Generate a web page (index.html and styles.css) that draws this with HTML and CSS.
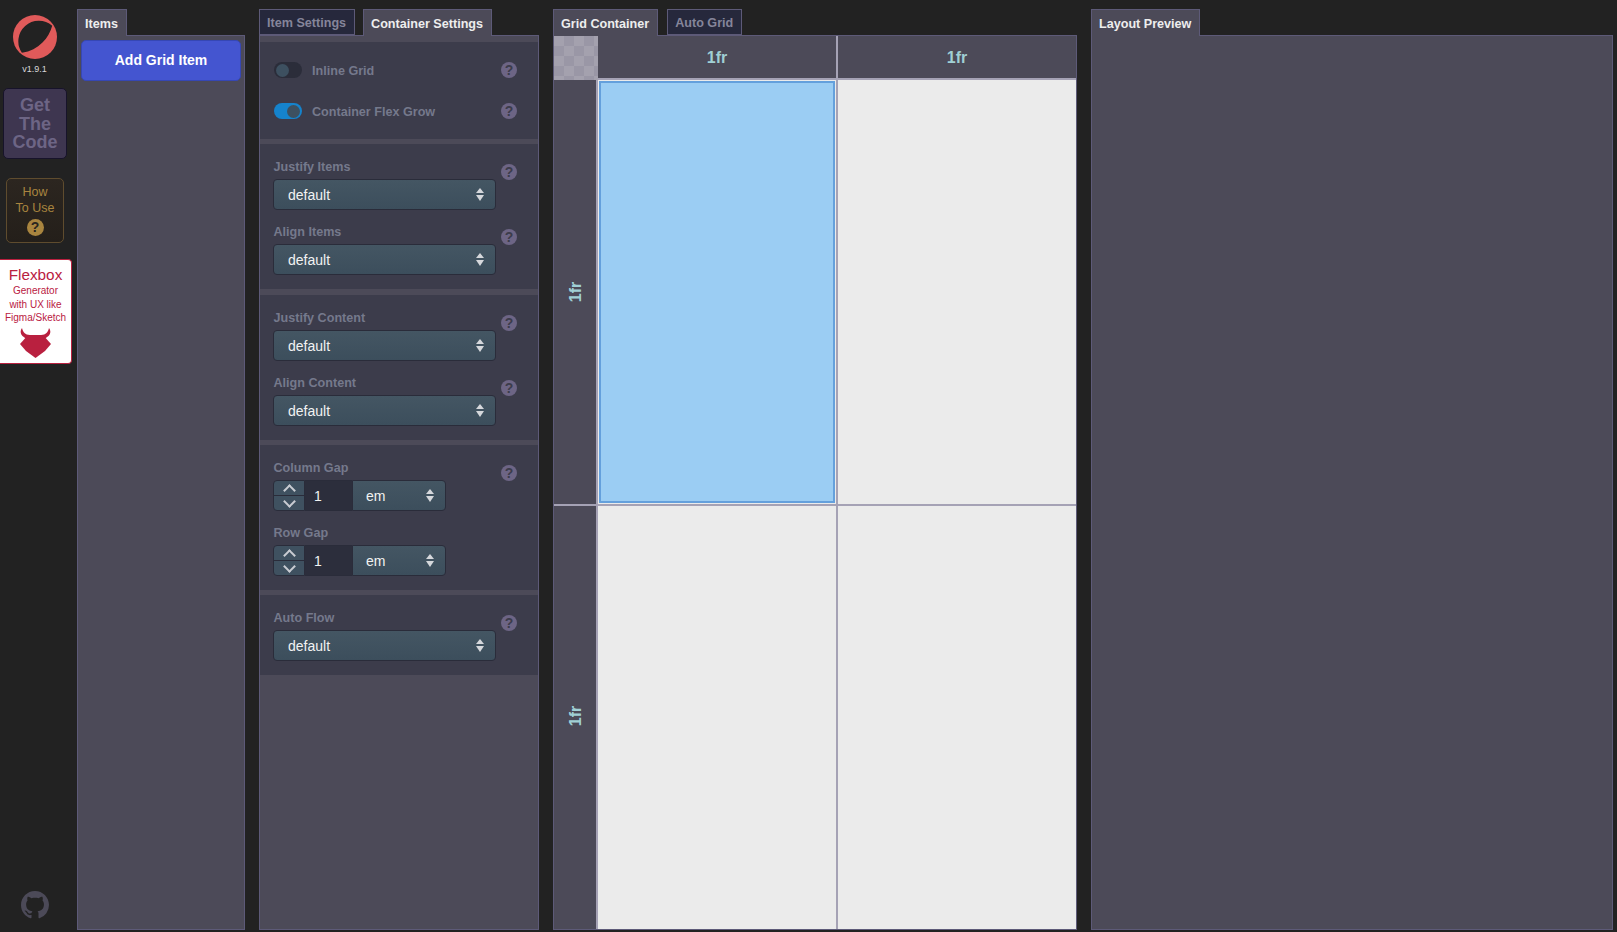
FILE: index.html
```html
<!DOCTYPE html>
<html lang="en">
  <head>
    <meta charset="UTF-8" />
    <title>Grid Generator</title>
    <link rel="stylesheet" href="styles.css">
  </head>
  <body>
    <div class="app">
      <div class="sidebar">
        <svg class="logo" viewBox="0 0 46 46">
          <circle cx="23" cy="23" r="22" fill="#e05a5a" />
          <path d="M9.9 38.8 A20.5 20.5 0 0 1 40.2 11.7 C37 24 27 36 9.9 38.8 Z" fill="#222222" />
        </svg>
        <div class="version">v1.9.1</div>
        <div class="getCode">Get The Code</div>
        <div class="howTo">
          <div>How<br />To Use</div>
          <div class="howToIcon">?</div>
        </div>
        <div class="flexbox">
          <div class="flexboxTitle">Flexbox</div>
          <div class="flexboxText">Generator<br />with UX like<br />Figma/Sketch</div>
          <svg class="bull" viewBox="0 0 31 31">
            <path d="M2 0 C-1 4 1 9 8 11 L10 7 C5 7 3 4 2 0 Z" fill="#b9203f" />
            <path d="M29 0 C32 4 30 9 23 11 L21 7 C26 7 28 4 29 0 Z" fill="#b9203f" />
            <path d="M8 7 L23 7 L31 16 L25 23 L15.5 30 L6 23 L0 16 Z" fill="#b9203f" />
          </svg>
        </div>
        <svg class="github" viewBox="0 0 16 16">
          <path d="M8 0C3.58 0 0 3.58 0 8c0 3.54 2.29 6.53 5.47 7.59.4.07.55-.17.55-.38 0-.19-.01-.82-.01-1.49-2.01.37-2.53-.49-2.69-.94-.09-.23-.48-.94-.82-1.13-.28-.15-.68-.52-.01-.53.63-.01 1.08.58 1.23.82.72 1.21 1.87.87 2.33.66.07-.52.28-.87.51-1.07-1.78-.2-3.64-.89-3.64-3.95 0-.87.31-1.59.82-2.15-.08-.2-.36-1.02.08-2.12 0 0 .67-.21 2.2.82.64-.18 1.32-.27 2-.27.68 0 1.36.09 2 .27 1.53-1.04 2.2-.82 2.2-.82.44 1.1.16 1.92.08 2.12.51.56.82 1.27.82 2.15 0 3.07-1.87 3.75-3.65 3.95.29.25.54.73.54 1.48 0 1.07-.01 1.93-.01 2.2 0 .21.15.46.55.38A8.013 8.013 0 0016 8c0-4.42-3.58-8-8-8z" fill="#4c4a58" />
        </svg>
      </div>

      <div class="column itemsColumn">
        <div class="tabs">
          <div class="tab active">Items</div>
        </div>
        <div class="panel itemsPanel">
          <div class="addButton">Add Grid Item</div>
        </div>
      </div>

      <div class="column settingsColumn">
        <div class="tabs">
          <div class="tab">Item Settings</div>
          <div class="tab active">Container Settings</div>
        </div>
        <div class="panel settingsPanel">
          <div class="section toggles">
            <div class="toggleRow">
              <div class="toggle"></div>
              <div class="toggleLabel">Inline Grid</div>
              <div class="help">?</div>
            </div>
            <div class="toggleRow">
              <div class="toggle on"></div>
              <div class="toggleLabel">Container Flex Grow</div>
              <div class="help">?</div>
            </div>
          </div>

          <div class="section">
            <div class="field">
              <div>
                <div class="label">Justify Items</div>
                <div class="select">default</div>
              </div>
              <div class="help">?</div>
            </div>
            <div class="field">
              <div>
                <div class="label">Align Items</div>
                <div class="select">default</div>
              </div>
              <div class="help">?</div>
            </div>
          </div>

          <div class="section">
            <div class="field">
              <div>
                <div class="label">Justify Content</div>
                <div class="select">default</div>
              </div>
              <div class="help">?</div>
            </div>
            <div class="field">
              <div>
                <div class="label">Align Content</div>
                <div class="select">default</div>
              </div>
              <div class="help">?</div>
            </div>
          </div>

          <div class="section">
            <div class="field">
              <div>
                <div class="label">Column Gap</div>
                <div class="stepper">
                  <div class="arrows">
                    <div class="arrow up"></div>
                    <div class="arrow down"></div>
                  </div>
                  <div class="stepValue">1</div>
                  <div class="select unit">em</div>
                </div>
              </div>
              <div class="help">?</div>
            </div>
            <div class="field">
              <div>
                <div class="label">Row Gap</div>
                <div class="stepper">
                  <div class="arrows">
                    <div class="arrow up"></div>
                    <div class="arrow down"></div>
                  </div>
                  <div class="stepValue">1</div>
                  <div class="select unit">em</div>
                </div>
              </div>
            </div>
          </div>

          <div class="section">
            <div class="field">
              <div>
                <div class="label">Auto Flow</div>
                <div class="select">default</div>
              </div>
              <div class="help">?</div>
            </div>
          </div>
        </div>
      </div>

      <div class="column gridColumn">
        <div class="tabs">
          <div class="tab active">Grid Container</div>
          <div class="tab">Auto Grid</div>
        </div>
        <div class="panel gridPanel">
          <div class="corner"></div>
          <div class="colHead">1fr</div>
          <div class="colHead second">1fr</div>
          <div class="rowHead"><span>1fr</span></div>
          <div class="cell first"><div class="cellSelected"></div></div>
          <div class="cell"></div>
          <div class="rowHead last"><span>1fr</span></div>
          <div class="cell first last"></div>
          <div class="cell last"></div>
        </div>
      </div>

      <div class="column previewColumn">
        <div class="tabs">
          <div class="tab active">Layout Preview</div>
        </div>
        <div class="panel"></div>
      </div>
    </div>
  </body>
</html>
```

FILE: styles.css
```css
* {
  box-sizing: border-box;
}
html,
body {
  height: 100%;
  margin: 0;
}
body {
  background-color: #222222;
  font-family: "Liberation Sans", Arial, sans-serif;
  color: #eeeeee;
  overflow: hidden;
}
.app {
  display: flex;
  gap: 14px;
  height: 100%;
  padding: 9px 4px 2px 0;
}

/* left bar */
.sidebar {
  width: 63px;
  margin-top: -9px;
  margin-bottom: -2px;
  flex-shrink: 0;
  display: flex;
  flex-direction: column;
  align-items: flex-start;
}
.logo {
  width: 46px;
  height: 46px;
  margin-top: 14px;
  margin-left: 12px;
}
.version {
  align-self: flex-start;
  width: 69px;
  font-size: 9px;
  line-height: 11px;
  margin-top: 4px;
  color: #d8d8d8;
  text-align: center;
}
.getCode {
  width: 64px;
  height: 71px;
  margin-top: 13px;
  margin-left: 3px;
  padding-top: 7px;
  background-color: #3e3650;
  border: 1px solid #17132a;
  border-radius: 5px;
  color: #6d6585;
  font-size: 18px;
  font-weight: bold;
  line-height: 18.5px;
  text-align: center;
}
.howTo {
  width: 58px;
  height: 65px;
  margin-top: 19px;
  margin-left: 6px;
  padding-top: 5px;
  border: 1px solid #5f4c2e;
  border-radius: 5px;
  background: linear-gradient(#2c2620, #241f1a);
  color: #a9853f;
  font-size: 12.5px;
  line-height: 16px;
  text-align: center;
}
.howToIcon {
  width: 17px;
  height: 17px;
  margin: 3px auto 0;
  border-radius: 50%;
  background-color: #a9853f;
  color: #2a2520;
  font-size: 14px;
  font-weight: bold;
  line-height: 17px;
}
.flexbox {
  width: 72px;
  height: 105px;
  margin-top: 16px;
  padding-top: 6px;
  background-color: #ffffff;
  border: 1px solid #b9203f;
  border-left: none;
  border-radius: 0 4px 4px 0;
  color: #b9203f;
  text-align: center;
}
.flexboxTitle {
  font-size: 15.3px;
  line-height: 18px;
}
.flexboxText {
  font-size: 10px;
  line-height: 13.5px;
}
.bull {
  display: block;
  width: 31px;
  height: 31px;
  margin: 3px auto 0;
}
.github {
  width: 28px;
  height: 28px;
  margin-top: auto;
  margin-bottom: 13px;
  margin-left: 21px;
}

/* columns and tabs */
.column {
  display: flex;
  flex-direction: column;
}
.itemsColumn {
  width: 168px;
}
.settingsColumn {
  width: 280px;
}
.gridColumn {
  width: 524px;
}
.gridColumn .tabs {
  gap: 9px;
}
.previewColumn {
  flex: 1;
}
.tabs {
  display: flex;
  gap: 8px;
  height: 27px;
  flex-shrink: 0;
}
.tab {
  height: 26px;
  padding: 0 8px 0 7px;
  background-color: #26283c;
  border: 1px solid #5d5a78;
  color: #85859a;
  font-size: 12.6px;
  font-weight: bold;
  line-height: 27px;
}
.tab.active {
  height: 27px;
  background-color: #4c4a58;
  border-bottom: none;
  color: #eeeeee;
  line-height: 28px;
  position: relative;
  z-index: 1;
}
.panel {
  flex: 1;
  margin-top: -1px;
  background-color: #4c4a58;
  border: 1px solid #5d5a78;
}

/* items */
.itemsPanel {
  padding: 4px 3px;
}
.addButton {
  height: 41px;
  background-color: #4455d0;
  border: 1px solid #3647b4;
  border-radius: 5px;
  color: #ffffff;
  font-size: 14px;
  font-weight: bold;
  line-height: 38px;
  text-align: center;
}

/* settings */
.settingsPanel {
  display: flex;
  flex-direction: column;
  gap: 5px;
  padding-top: 6px;
}
.section {
  padding: 15px 13px 0;
  background-color: #3c3c4b;
}
.section:nth-child(3) {
  margin-top: 1px;
}
.toggles {
  padding: 17px 13px 15px 14px;
  height: 97px;
}
.toggleRow {
  display: flex;
  align-items: center;
  width: 243px;
  height: 24px;
  margin-bottom: 17px;
}
.toggle {
  width: 28px;
  height: 16px;
  margin-top: -2px;
  padding: 1px;
  border-radius: 8px;
  background-color: #2b2d3a;
}
.toggle::after {
  content: "";
  display: block;
  width: 13px;
  height: 13px;
  margin-top: 0.5px;
  margin-left: 1px;
  border-radius: 50%;
  background-color: #3d5060;
}
.toggle.on {
  background-color: #1583cc;
}
.toggle.on::after {
  margin-left: 12px;
}
.toggleLabel {
  margin-left: 10px;
  color: #75798c;
  font-size: 12.6px;
  font-weight: bold;
}
.toggleRow .help {
  margin-top: -2px;
  margin-left: auto;
}
.field {
  display: flex;
  justify-content: space-between;
  width: 244px;
  padding-bottom: 14px;
}
.label {
  height: 16px;
  margin-bottom: 4px;
  padding-left: 0.5px;
  color: #75798c;
  font-size: 12.6px;
  font-weight: bold;
  line-height: 16px;
}
.help {
  width: 16px;
  height: 16px;
  margin-top: 5px;
  border-radius: 50%;
  background-color: #6d6585;
  color: #3c3c4b;
  flex-shrink: 0;
  font-size: 14px;
  font-weight: bold;
  line-height: 16px;
  text-align: center;
}
.select {
  position: relative;
  width: 223px;
  height: 31px;
  padding-left: 14px;
  background: linear-gradient(#445663, #3c4e5c);
  border: 1px solid #2a2c3a;
  border-radius: 4px;
  color: #f2f2f2;
  font-size: 14px;
  line-height: 31px;
}
.select::before,
.select::after {
  content: "";
  position: absolute;
  right: 11px;
  border-left: 4px solid transparent;
  border-right: 4px solid transparent;
}
.select::before {
  top: 8px;
  border-bottom: 5px solid #d6d8dc;
}
.select::after {
  top: 15px;
  border-top: 6px solid #d6d8dc;
}
.stepper {
  display: flex;
  width: 173px;
  height: 31px;
}
.arrows {
  width: 32px;
  border: 1px solid #2a2c3a;
  border-radius: 4px 0 0 4px;
  background-color: #3f5160;
}
.arrow {
  position: relative;
  height: 14.5px;
}
.arrow::after {
  content: "";
  position: absolute;
  left: 11px;
  width: 7px;
  height: 7px;
  border-left: 2px solid #c9ccd2;
  border-top: 2px solid #c9ccd2;
}
.arrow.up {
  border-bottom: 1px solid #2a2c3a;
}
.arrow.up::after {
  top: 5px;
  transform: rotate(45deg);
}
.arrow.down::after {
  top: 1px;
  transform: rotate(225deg);
}
.stepValue {
  width: 47px;
  padding-left: 9px;
  background-color: #2c2e3c;
  border-top: 1px solid #2a2c3a;
  border-bottom: 1px solid #2a2c3a;
  color: #f2f2f2;
  font-size: 14px;
  line-height: 30px;
}
.unit {
  width: 94px;
  padding-left: 13px;
  border-radius: 0 4px 4px 0;
}

/* grid */
.gridPanel {
  display: grid;
  grid-template-columns: 44px 238px 1fr;
  grid-template-rows: 44px 426px 1fr;
}
.corner {
  background-color: #a4a1ae;
  background-image: conic-gradient(#9a97a6 25%, transparent 0 50%, #9a97a6 0 75%, transparent 0);
  background-size: 20px 20px;
}
.colHead {
  border-bottom: 2px solid #a5a2b5;
  color: #a0d0d5;
  font-size: 16px;
  font-weight: bold;
  line-height: 44px;
  text-align: center;
}
.colHead.second {
  border-left: 2px solid #a5a2b5;
}
.rowHead {
  display: flex;
  align-items: center;
  justify-content: center;
  border-bottom: 2px solid #a5a2b5;
  color: #a0d0d5;
  font-size: 16px;
  font-weight: bold;
}
.rowHead.last {
  padding-bottom: 4px;
  border-bottom: none;
}
.rowHead span {
  transform: rotate(-90deg);
}
.cell {
  background-color: #ebebeb;
  border-left: 2px solid #a5a2b5;
  border-bottom: 2px solid #a5a2b5;
}
.cell.first {
  border-left: none;
  box-shadow: -2px 0 0 #a5a2b5;
}
.cell.last {
  border-bottom: none;
}
.cellSelected {
  height: calc(100% - 2px);
  margin: 1px;
  background-color: #9bcdf3;
  border: 2px solid #64a0dc;
}
```
